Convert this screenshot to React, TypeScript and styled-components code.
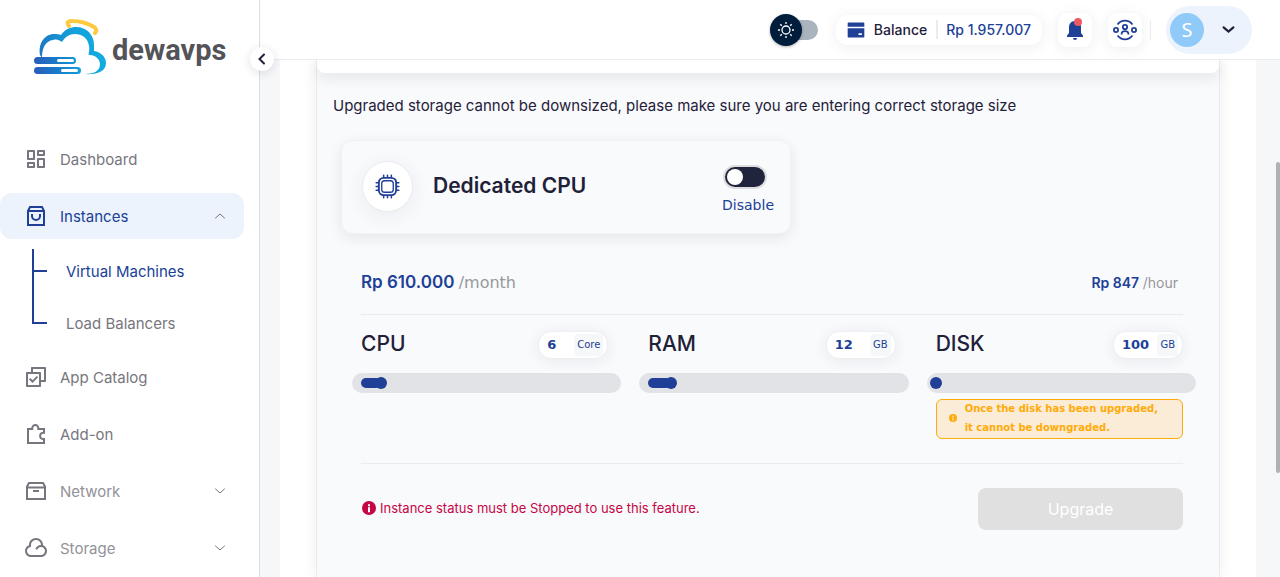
import React, { useState } from "react";
import styled, { createGlobalStyle, css } from "styled-components";
import {
  RiDashboardLine,
  RiCheckboxMultipleLine,
  RiCloudLine,
  RiBankCardFill,
} from "react-icons/ri";

const color = {
  brand: "#203f97",
  ink: "#1f2139",
  muted: "#77767e",
  soft: "#929298",
  line: "#e9ebee",
  page: "#f6f7f9",
  panel: "#f9fafc",
  tint: "#ecf3fc",
};
const sans = `Inter, "Liberation Sans", sans-serif`;
const system = `"DejaVu Sans", sans-serif`;

const Global = createGlobalStyle`
  *, *::before, *::after { box-sizing: border-box; }
  body { margin: 0; background: ${color.page}; font-family: ${sans}; color: ${color.ink}; }
  button, input { font: inherit; color: inherit; }
  button { border: 0; padding: 0; background: none; cursor: pointer; }
  a { color: inherit; text-decoration: none; }
  ul { list-style: none; margin: 0; padding: 0; }
  h2, h3, p { margin: 0; }
`;

const Shell = styled.div`
  position: relative;
  display: flex;
  height: 100vh;
  overflow: hidden;
`;

/* ---------- sidebar ---------- */
const Sidebar = styled.aside`
  position: relative;
  z-index: 2;
  flex: 0 0 260px;
  background: #fff;
  border-right: 1px solid #dddee1;
`;
const Brand = styled.a`
  display: flex;
  align-items: center;
  gap: 5px;
  height: 131px;
  padding: 19px 0 55px 33px;
`;
const BrandName = styled.span`
  padding-top: 4px;
  font: 700 29px/32px Roboto, sans-serif;
  color: #535358;
`;
const Collapse = styled.button`
  position: absolute;
  top: 47px;
  right: -15px;
  display: grid;
  place-items: center;
  width: 24px;
  height: 24px;
  border-radius: 50%;
  background: #fff;
  box-shadow: 0 2px 10px rgba(30, 40, 70, 0.14);
`;
const NavEntry = styled.li`
  display: flow-root;
`;
const NavRow = styled.a<{ $active?: boolean; $soft?: boolean }>`
  display: flex;
  align-items: center;
  gap: 12px;
  height: 46px;
  margin: 5px 15px 6px 0;
  padding: 0 18px 0 24px;
  border-radius: 12px;
  font-size: 15px;
  font-weight: 400;
  color: ${(p) => (p.$active ? color.brand : p.$soft ? color.soft : color.muted)};
  background: ${(p) => (p.$active ? color.tint : "transparent")};
`;
const NavIcon = styled.span<{ $active?: boolean }>`
  display: flex;
  color: ${(p) => (p.$active ? color.brand : color.muted)};
`;
const NavLabel = styled.span`
  flex: 1;
`;
const SubList = styled.ul`
  position: relative;
  &::before {
    content: "";
    position: absolute;
    left: 32px;
    top: 4px;
    bottom: 25px;
    border-left: 2px solid ${color.brand};
  }
`;
const SubRow = styled.a<{ $active?: boolean }>`
  display: flex;
  align-items: center;
  gap: 19px;
  height: 52px;
  padding-left: 32px;
  font-size: 15px;
  font-weight: 400;
  color: ${(p) => (p.$active ? color.brand : color.muted)};
  &::before {
    content: "";
    width: 15px;
    height: 2px;
    background: ${color.brand};
  }
`;

/* ---------- top bar ---------- */
const Main = styled.div`
  flex: 1;
  min-width: 0;
  display: flex;
  flex-direction: column;
`;
const TopBar = styled.header`
  position: relative;
  z-index: 1;
  flex: none;
  display: flex;
  align-items: center;
  justify-content: flex-end;
  height: 60px;
  padding-right: 28px;
  background: #fff;
  border-bottom: 1px solid ${color.line};
`;
const ThemeSwitch = styled.button`
  display: flex;
  align-items: center;
  width: 48px;
  height: 20px;
  margin-right: 18px;
  border-radius: 10px;
  background: #aab4be;
`;
const ThemeKnob = styled.span`
  display: grid;
  place-items: center;
  width: 32px;
  height: 32px;
  border-radius: 50%;
  background: #001e3c;
  box-shadow: 0 1px 3px rgba(0, 0, 0, 0.3);
`;
const raised = css`
  background: #fff;
  box-shadow: 0 2px 14px rgba(30, 40, 70, 0.08);
`;
const Balance = styled.a`
  ${raised}
  display: flex;
  align-items: center;
  height: 30px;
  padding: 0 11px 0 10px;
  border-radius: 12px;
  font-size: 14px;
  font-weight: 500;
  svg { margin-right: 8px; color: ${color.brand}; }
`;
const Amount = styled.span`
  margin-left: 9px;
  padding: 1px 0 1px 8px;
  border-left: 2px solid ${color.line};
  color: ${color.brand};
`;
const IconButton = styled.button`
  ${raised}
  position: relative;
  display: grid;
  place-items: center;
  width: 34px;
  height: 34px;
  margin-left: 16px;
  border-radius: 9px;
  color: ${color.brand};
`;
const Dot = styled.span`
  position: absolute;
  top: 5px;
  right: 10px;
  width: 8px;
  height: 8px;
  border-radius: 50%;
  background: #ec5b62;
`;
const Profile = styled.button`
  position: relative;
  display: flex;
  align-items: center;
  justify-content: space-between;
  width: 86px;
  height: 48px;
  margin-left: 24px;
  padding: 0 17px 0 4px;
  border-radius: 24px;
  background: ${color.tint};
  &::before {
    content: "";
    position: absolute;
    left: -16px;
    height: 20px;
    border-left: 1px solid ${color.line};
  }
`;
const Avatar = styled.span`
  display: grid;
  place-items: center;
  width: 34px;
  height: 34px;
  border-radius: 50%;
  background: #90caf9;
  color: #fff;
  font: 400 20px/20px "Noto Sans", sans-serif;
`;

/* ---------- content ---------- */
const Content = styled.main`
  flex: 1;
  display: flex;
  min-height: 0;
  margin: 0 24px 0 20px;
  padding: 0 36px;
  background: #fff;
`;
const Panel = styled.section`
  flex: 1;
  display: flex;
  flex-direction: column;
  min-width: 0;
  background: ${color.panel};
  border: 1px solid ${color.line};
  border-width: 0 1px;
  box-shadow: 0 0 14px rgba(30, 40, 70, 0.08);
`;
const PanelHead = styled.div`
  height: 13px;
  flex: none;
  background: #fff;
  border-radius: 0 0 8px 8px;
  box-shadow: 0 5px 14px rgba(30, 35, 30, 0.1);
`;
const Notice = styled.p`
  padding: 23px 16px 0;
  font-size: 15px;
  line-height: 20px;
  font-weight: 400;
`;
const CpuCard = styled.div`
  display: flex;
  align-items: center;
  align-self: flex-start;
  width: 450px;
  max-width: calc(100% - 48px);
  height: 94px;
  margin: 24px 24px 0;
  padding: 0 16px 2px 20px;
  border: 1px solid #eff1f3;
  border-radius: 12px;
  box-shadow: 0 4px 14px rgba(30, 35, 30, 0.09);
`;
const Round = styled.span`
  display: grid;
  place-items: center;
  width: 51px;
  height: 51px;
  border: 1px solid ${color.line};
  border-radius: 50%;
  background: #fff;
  box-shadow: 0 4px 20px rgba(30, 40, 70, 0.07);
  color: ${color.brand};
`;
const CardTitle = styled.h2`
  flex: 1;
  margin-left: 20px;
  font-size: 21px;
  line-height: 28px;
  font-weight: 600;
`;
const SwitchLabel = styled.label`
  display: flex;
  flex-direction: column;
  gap: 6px;
  margin-top: 8px;
  font: 14px/20px ${system};
  color: ${color.brand};
`;
const Switch = styled.input`
  appearance: none;
  display: flex;
  align-items: center;
  width: 44px;
  height: 24px;
  margin: 0 0 0 1px;
  padding: 0 2px;
  border: 2px solid #dddddf;
  border-radius: 12px;
  background: #20243c;
  &::before {
    content: "";
    width: 16px;
    height: 16px;
    border-radius: 50%;
    background: #fff;
  }
  &:checked { justify-content: flex-end; background: ${color.brand}; }
`;
const Form = styled.form`
  padding: 34px 23px 0 35px;
`;
const Prices = styled.div`
  display: flex;
  align-items: baseline;
  justify-content: space-between;
  height: 47px;
  margin: 0 13px 0 9px;
  padding: 2px 5px 0 0;
  border-bottom: 1px solid ${color.line};
`;
const Price = styled.p<{ $large?: boolean }>`
  font-size: ${(p) => (p.$large ? 17 : 14)}px;
  line-height: 24px;
  font-weight: 600;
  color: ${color.brand};
`;
const Period = styled.span<{ $large?: boolean }>`
  font: ${(p) => (p.$large ? `400 16px/24px ${system}` : `400 14px/24px ${sans}`)};
  color: #98989c;
`;
const Resources = styled.div`
  display: grid;
  grid-template-columns: repeat(3, 1fr);
  gap: 18px;
  min-height: 148px;
  padding-top: 16px;
`;
const ResourceHead = styled.div`
  display: flex;
  align-items: center;
  justify-content: space-between;
  height: 28px;
  margin: 0 13px 14px 9px;
`;
const ResourceName = styled.label`
  padding-bottom: 2px;
  font-size: 21px;
  line-height: 28px;
  font-weight: 500;
`;
const Amounts = styled.div`
  ${raised}
  display: flex;
  align-items: center;
  width: 70px;
  height: 28px;
  padding: 2px 4px 2px 8px;
  border: 1px solid #eeeff1;
  border-radius: 13px;
  color: ${color.brand};
`;
const AmountInput = styled.input`
  flex: 1;
  min-width: 0;
  width: 20px;
  padding: 0;
  border: 0;
  background: none;
  font: 700 13px/18px ${system};
`;
const Unit = styled.span`
  padding: 0 3px;
  border-radius: 4px;
  background: #f6f7f8;
  font: 10px/22px ${system};
`;
const Rail = styled.div`
  position: relative;
  display: flex;
  align-items: center;
  height: 20px;
  padding: 0 9px;
  border-radius: 10px;
  background: #e2e3e6;
`;
const Fill = styled.span`
  height: 10px;
  border-radius: 5px;
  background: ${color.brand};
`;
const Range = styled.input`
  appearance: none;
  position: absolute;
  inset: 4px 3px;
  height: 12px;
  margin: 0;
  background: none;
  &::-webkit-slider-thumb {
    appearance: none;
    width: 12px;
    height: 12px;
    border-radius: 50%;
    background: ${color.brand};
  }
`;
const Warning = styled.p`
  display: flex;
  align-items: center;
  gap: 8px;
  height: 40px;
  margin: 6px 13px 0 9px;
  padding: 0 12px 2px;
  border: 1px solid #ffab0a;
  border-radius: 6px;
  background: #faecd6;
  font: 700 10px/19px ${system};
  color: #ffab0a;
  svg { flex: none; }
`;
const WarningText = styled.span`
  max-width: 204px;
`;
const Footer = styled.div`
  display: flex;
  align-items: center;
  justify-content: space-between;
  margin: 0 13px 0 9px;
  padding-top: 24px;
  border-top: 1px solid ${color.line};
`;
const ErrorText = styled.p`
  display: flex;
  align-items: center;
  gap: 4px;
  padding: 0 0 2px 1px;
  font-size: 13px;
  line-height: 20px;
  color: #c50645;
`;
const Submit = styled.button`
  width: 205px;
  height: 42px;
  border-radius: 8px;
  background: #e0e0e0;
  font-size: 16px;
  color: #fff;
`;
const ScrollThumb = styled.span`
  position: absolute;
  z-index: 3;
  right: 0;
  top: 28%;
  width: 4px;
  height: 54%;
  border-radius: 2px;
  background: #b1b1b1;
`;

/* ---------- drawings ---------- */
const Logo = () => (
  <svg width="74" height="57" viewBox="0 0 74 57" fill="none" aria-hidden="true">
    <defs>
      <linearGradient id="sky" x1="6" y1="0" x2="72" y2="0" gradientUnits="userSpaceOnUse">
        <stop stopColor="#1b78c4" />
        <stop offset=".5" stopColor="#14a0da" />
        <stop offset="1" stopColor="#10ace2" />
      </linearGradient>
      <linearGradient id="bar" x1="0" y1="0" x2="48" y2="0" gradientUnits="userSpaceOnUse">
        <stop stopColor="#2a5bb8" />
        <stop offset=".7" stopColor="#1488d0" />
        <stop offset="1" stopColor="#12a2dc" />
      </linearGradient>
    </defs>
    <path
      fill="url(#sky)"
      d="M7 36C5 24 12 15 21 15c3 0 5 0 7 1C32 10 38 8 43 8c11 0 18 8 18 18v6c7 1 12 6 12 12 0 8-8 12-22 11 10 0 16-3 16-10 0-5-5-9-10-9h-1c-1-1 1-5 0-9-1-8-7-12-14-12-6 0-10 3-13 8-3-2-5-3-9-2-7 1-11 7-11 18z"
    />
    <rect x="1" y="38" width="42" height="7" rx="3.500" fill="url(#bar)" />
    <rect x="24" y="40" width="17" height="3" rx="1.500" fill="#fff" />
    <rect x="1" y="48" width="47" height="7" rx="3.500" fill="url(#bar)" />
    <rect x="28" y="50" width="17" height="3" rx="1.500" fill="#fff" />
    <path
      d="M36 7c-3-4-1-5 3-5 9 0 17 3 22 6 3 2 3 4 1 6"
      stroke="#fdc93f"
      strokeWidth="4"
      strokeLinecap="round"
      strokeLinejoin="round"
    />
  </svg>
);
const Chevron = ({ d, size, stroke }: { d: string; size: number; stroke: number }) => (
  <svg
    width={size}
    height={size}
    viewBox="0 0 12 12"
    fill="none"
    stroke="currentColor"
    strokeWidth={stroke}
    strokeLinecap="round"
    aria-hidden="true"
  >
    <path d={d} />
  </svg>
);
const LineIcon = ({ d }: { d: string }) => (
  <svg width="24" height="24" viewBox="0 0 24 24" fill="none" stroke="currentColor" strokeWidth="2" aria-hidden="true">
    <path d={d} />
  </svg>
);
const ARCHIVE = "M3 7.500l2-3.500h14l2 3.500V20H3zM3 8.500h18M9 12h6";
const BAG = "M4 7l2-4h12l2 4v14H4zM4 7h16M8 10v2a4 4 0 0 0 8 0v-2";
const PUZZLE =
  "M4 7h4.200C7.600 1.800 15 1.800 14.300 7H20v3.700C14.800 10.200 14.800 17.600 20 17v4H4z";
const SunIcon = () => (
  <svg width="20" height="20" viewBox="0 0 20 20" fill="none" stroke="#fff" strokeWidth="1.300" aria-hidden="true">
    <circle cx="10" cy="10" r="4" />
    <path d="M10 2v2M10 16v2M2 10h2M16 10h2M4.300 4.300l1.500 1.500M14.200 14.200l1.500 1.500M15.700 4.300l-1.500 1.500M5.800 14.200l-1.500 1.500" />
  </svg>
);
const BellIcon = () => (
  <svg width="18" height="20" viewBox="0 0 18 20" fill="currentColor" aria-hidden="true">
    <path d="M9 1C5 1 3 4 3 7v6l-2 2.500V17h16v-1.500L15 13V7c0-3-2-6-6-6zM7 18h4a2 2 0 0 1-4 0z" />
  </svg>
);
const TeamIcon = () => (
  <svg width="24" height="22" viewBox="0 0 24 22" fill="none" stroke="currentColor" strokeWidth="1.800" aria-hidden="true">
    <circle cx="3" cy="11" r="2.100" />
    <circle cx="21" cy="11" r="2.100" />
    <circle cx="12" cy="8" r="2.200" />
    <path d="M8.500 15.500c0-4.500 7-4.500 7 0" />
    <path d="M4.500 5.500C8.500 .400 15.500 .400 19.500 5.500M4.500 16.500c4 5.100 11 5.100 15 0" />
  </svg>
);
const ChipIcon = () => (
  <svg width="25" height="25" viewBox="0 0 26 26" fill="none" stroke="currentColor" aria-hidden="true">
    <rect x="4" y="4" width="18" height="18" rx="5" strokeWidth="2" />
    <rect x="7" y="7" width="12" height="12" rx="3" strokeWidth="1.400" />
    <path
      strokeWidth="1.600"
      strokeLinecap="round"
      d="M9 1.200V3M13 1.200V3M17 1.200V3M9 23v1.800M13 23v1.800M17 23v1.800M1.200 9H3M1.200 13H3M1.200 17H3M23 9h1.800M23 13h1.800M23 17h1.800"
    />
  </svg>
);
const InfoIcon = ({ size, mark }: { size: number; mark: string }) => (
  <svg width={size} height={size} viewBox="0 0 14 14" aria-hidden="true">
    <circle cx="7" cy="7" r="7" fill="currentColor" />
    <path d="M6 3.200h2v2H6zM6 6.200h2v5H6z" fill={mark} />
  </svg>
);

const UP = "M1.500 8l4.500-4 4.500 4";
const DOWN = "M1.500 4l4.500 4 4.500-4";

type ResourceProps = {
  id: string;
  name: string;
  unit: string;
  min: number;
  max: number;
  initial: number;
  children?: React.ReactNode;
};

function Resource({ id, name, unit, min, max, initial, children }: ResourceProps) {
  const [value, setValue] = useState(initial);
  const change = (e: React.ChangeEvent<HTMLInputElement>) => setValue(Number(e.target.value) || min);
  return (
    <div>
      <ResourceHead>
        <ResourceName htmlFor={id}>{name}</ResourceName>
        <Amounts>
          <AmountInput id={id} value={value} onChange={change} />
          <Unit>{unit}</Unit>
        </Amounts>
      </ResourceHead>
      <Rail>
        <Fill style={{ width: `${((value - min) / (max - min)) * 100}%` }} />
        <Range type="range" aria-label={name} min={min} max={max} value={value} onChange={change} />
      </Rail>
      {children}
    </div>
  );
}

type NavItemProps = {
  label: string;
  icon: React.ReactNode;
  active?: boolean;
  soft?: boolean;
  arrow?: string;
  children?: React.ReactNode;
};

function NavItem({ label, icon, active, soft, arrow, children }: NavItemProps) {
  return (
    <NavEntry>
      <NavRow href="#" $active={active} $soft={soft}>
        <NavIcon $active={active}>{icon}</NavIcon>
        <NavLabel>{label}</NavLabel>
        {arrow && (
          <NavIcon>
            <Chevron d={arrow} size={12} stroke={1} />
          </NavIcon>
        )}
      </NavRow>
      {children}
    </NavEntry>
  );
}

export default function App() {
  return (
    <Shell>
      <Global />
      <Sidebar>
        <Brand href="#">
          <Logo />
          <BrandName>dewavps</BrandName>
        </Brand>
        <Collapse aria-label="Collapse menu">
          <Chevron d="M8 1.500L3.500 6 8 10.500" size={12} stroke={2} />
        </Collapse>
        <nav>
          <ul>
            <NavItem label="Dashboard" icon={<RiDashboardLine size={24} />} />
            <NavItem label="Instances" icon={<LineIcon d={BAG} />} active arrow={UP}>
              <SubList>
                <li>
                  <SubRow href="#" $active>Virtual Machines</SubRow>
                </li>
                <li>
                  <SubRow href="#">Load Balancers</SubRow>
                </li>
              </SubList>
            </NavItem>
            <NavItem label="App Catalog" icon={<RiCheckboxMultipleLine size={24} />} />
            <NavItem label="Add-on" icon={<LineIcon d={PUZZLE} />} />
            <NavItem label="Network" icon={<LineIcon d={ARCHIVE} />} soft arrow={DOWN} />
            <NavItem label="Storage" icon={<RiCloudLine size={24} />} soft arrow={DOWN} />
          </ul>
        </nav>
      </Sidebar>

      <Main>
        <TopBar>
          <ThemeSwitch aria-label="Switch theme">
            <ThemeKnob>
              <SunIcon />
            </ThemeKnob>
          </ThemeSwitch>
          <Balance href="#">
            <RiBankCardFill size={20} />
            Balance
            <Amount>Rp 1.957.007</Amount>
          </Balance>
          <IconButton aria-label="Notifications">
            <BellIcon />
            <Dot />
          </IconButton>
          <IconButton aria-label="Team">
            <TeamIcon />
          </IconButton>
          <Profile aria-label="Account">
            <Avatar>S</Avatar>
            <Chevron d={DOWN} size={13} stroke={2} />
          </Profile>
        </TopBar>

        <Content>
          <Panel>
            <PanelHead />
            <Notice>
              Upgraded storage cannot be downsized, please make sure you are entering correct storage size
            </Notice>
            <CpuCard>
              <Round>
                <ChipIcon />
              </Round>
              <CardTitle>Dedicated CPU</CardTitle>
              <SwitchLabel>
                <Switch type="checkbox" role="switch" />
                Disable
              </SwitchLabel>
            </CpuCard>
            <Form onSubmit={(e) => e.preventDefault()}>
              <Prices>
                <Price $large>
                  Rp 610.000 <Period $large>/month</Period>
                </Price>
                <Price>
                  Rp 847 <Period>/hour</Period>
                </Price>
              </Prices>
              <Resources>
                <Resource id="cpu" name="CPU" unit="Core" min={0} max={75} initial={6} />
                <Resource id="ram" name="RAM" unit="GB" min={0} max={136} initial={12} />
                <Resource id="disk" name="DISK" unit="GB" min={100} max={1000} initial={100}>
                  <Warning>
                    <InfoIcon size={8} mark="#faecd6" />
                    <WarningText>Once the disk has been upgraded, it cannot be downgraded.</WarningText>
                  </Warning>
                </Resource>
              </Resources>
              <Footer>
                <ErrorText>
                  <InfoIcon size={14} mark="#fff" />
                  Instance status must be Stopped to use this feature.
                </ErrorText>
                <Submit type="submit" disabled>
                  Upgrade
                </Submit>
              </Footer>
            </Form>
          </Panel>
        </Content>
      </Main>
      <ScrollThumb />
    </Shell>
  );
}
